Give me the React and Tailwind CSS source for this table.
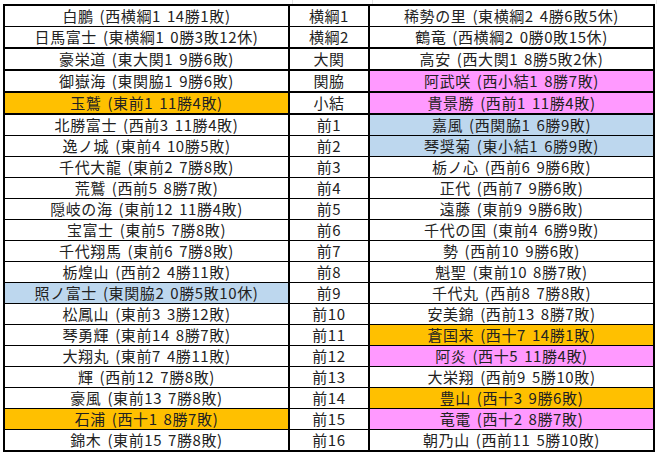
import React from "react";

const rows = [
  ["白鵬 (西横綱1 14勝1敗)", "", "横綱1", "稀勢の里 (東横綱2 4勝6敗5休)", ""],
  ["日馬富士 (東横綱1 0勝3敗12休)", "", "横綱2", "鶴竜 (西横綱2 0勝0敗15休)", ""],
  ["豪栄道 (東大関1 9勝6敗)", "", "大関", "高安 (西大関1 8勝5敗2休)", ""],
  ["御嶽海 (東関脇1 9勝6敗)", "", "関脇", "阿武咲 (西小結1 8勝7敗)", "p"],
  ["玉鷲 (東前1 11勝4敗)", "o", "小結", "貴景勝 (西前1 11勝4敗)", "p"],
  ["北勝富士 (西前3 11勝4敗)", "", "前1", "嘉風 (西関脇1 6勝9敗)", "b"],
  ["逸ノ城 (東前4 10勝5敗)", "", "前2", "琴奨菊 (東小結1 6勝9敗)", "b"],
  ["千代大龍 (東前2 7勝8敗)", "", "前3", "栃ノ心 (西前6 9勝6敗)", ""],
  ["荒鷲 (西前5 8勝7敗)", "", "前4", "正代 (西前7 9勝6敗)", ""],
  ["隠岐の海 (東前12 11勝4敗)", "", "前5", "遠藤 (東前9 9勝6敗)", ""],
  ["宝富士 (東前5 7勝8敗)", "", "前6", "千代の国 (東前4 6勝9敗)", ""],
  ["千代翔馬 (東前6 7勝8敗)", "", "前7", "勢 (西前10 9勝6敗)", ""],
  ["栃煌山 (西前2 4勝11敗)", "", "前8", "魁聖 (東前10 8勝7敗)", ""],
  ["照ノ富士 (東関脇2 0勝5敗10休)", "b", "前9", "千代丸 (西前8 7勝8敗)", ""],
  ["松鳳山 (東前3 3勝12敗)", "", "前10", "安美錦 (西前13 8勝7敗)", ""],
  ["琴勇輝 (東前14 8勝7敗)", "", "前11", "蒼国来 (西十7 14勝1敗)", "o"],
  ["大翔丸 (東前7 4勝11敗)", "", "前12", "阿炎 (西十5 11勝4敗)", "p"],
  ["輝 (西前12 7勝8敗)", "", "前13", "大栄翔 (西前9 5勝10敗)", ""],
  ["豪風 (東前13 7勝8敗)", "", "前14", "豊山 (西十3 9勝6敗)", "o"],
  ["石浦 (西十1 8勝7敗)", "o", "前15", "竜電 (西十2 8勝7敗)", "p"],
  ["錦木 (東前15 7勝8敗)", "", "前16", "朝乃山 (西前11 5勝10敗)", ""],
];

const bg = {
  "": "bg-white",
  o: "bg-[#ffc000]",
  p: "bg-[#ff99ff]",
  b: "bg-[#bdd7ee]",
};

function borderFor(i) {
  if (i === rows.length - 1) return "";
  if (i >= 1 && i <= 4) return "border-b-2 border-black";
  return "border-b border-black";
}

export default function App() {
  return (
    <div
      className="w-[659px] h-[453px] bg-white overflow-hidden text-[#222222] text-[15px] leading-[20px] tracking-[0.04em] [word-spacing:2px]"
      style={{ fontFamily: '"Noto Sans CJK JP", "Noto Sans", sans-serif' }}
    >
      <div className="flex h-[4px]">
        <div className="w-[293px] h-full border-r border-[#e4e4e4]" />
        <div className="w-[80px] h-full border-r border-[#e4e4e4]" />
        <div className="w-[284px] h-full border-r border-[#e4e4e4]" />
      </div>
      <div className="ml-[3px] w-[652px] border-2 border-black">
        {rows.map((r, i) => (
          <div key={i} className={`flex ${borderFor(i)}`}>
            <div className={`w-[283px] h-[20px] text-center whitespace-nowrap ${bg[r[1]]}`}>
              {r[0]}
            </div>
            <div className="w-[82px] h-[20px] border-x-2 border-black text-center bg-white whitespace-nowrap">
              {r[2]}
            </div>
            <div className={`w-[283px] h-[20px] text-center whitespace-nowrap ${bg[r[4]]}`}>
              {r[3]}
            </div>
          </div>
        ))}
      </div>
    </div>
  );
}
